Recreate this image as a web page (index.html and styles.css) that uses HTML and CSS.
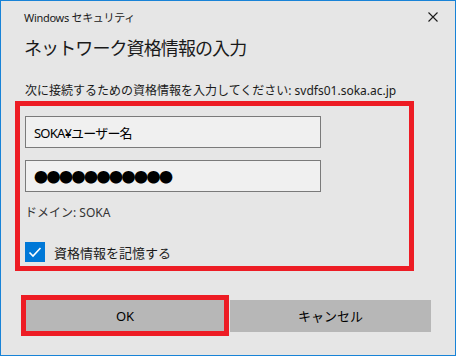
FILE: index.html
```html
<!DOCTYPE html>
<html lang="ja">
<head>
    <meta charset="utf-8">
    <title>Windows セキュリティ</title>
    <link rel="stylesheet" href="styles.css">
</head>
<body>
    <div class="window">
        <!-- Title bar -->
        <div class="titlebar">
            <span class="title">Windows セキュリティ</span>
            <svg class="close" width="10" height="10" viewBox="0 0 10 10">
                <path d="M0.5 0.5 L9.5 9.5 M9.5 0.5 L0.5 9.5" stroke="#1a1a1a" stroke-width="1.1" fill="none"/>
            </svg>
        </div>

        <h1 class="heading">ネットワーク資格情報の入力</h1>
        <p class="prompt">次に接続するための資格情報を入力してください: svdfs01.soka.ac.jp</p>

        <!-- Credentials area (highlighted) -->
        <div class="credentials">
            <div class="field">SOKA¥ユーザー名</div>
            <div class="field password">●●●●●●●●●●●</div>
            <div class="domain">ドメイン: SOKA</div>
            <label class="remember">
                <span class="checkbox">
                    <svg width="20" height="20" viewBox="0 0 20 20">
                        <path d="M4.5 10.5 L8 14 L15.5 6" stroke="#fff" stroke-width="1.6" fill="none"/>
                    </svg>
                </span>
                資格情報を記憶する
            </label>
        </div>

        <!-- Buttons -->
        <div class="buttons">
            <button class="btn btn-ok">OK</button>
            <button class="btn btn-cancel">キャンセル</button>
        </div>
    </div>
</body>
</html>
```

FILE: styles.css
```css
/* Whole dialog window */
body {
    margin: 0;
    font-family: "Noto Sans", "Noto Sans CJK JP", sans-serif;
    color: #1a1a1a;
}
.window {
    width: 456px;
    height: 356px;
    box-sizing: border-box;
    border: 1px solid #1883d7;
    background-color: #e6e6e6;
    display: flex;
    flex-direction: column;
}
.titlebar {
    height: 32px;
    padding-left: 23px;
    padding-right: 17px;
    display: flex;
    align-items: center;
    justify-content: space-between;
}
.title {
    font-size: 11px;
    letter-spacing: -0.3px;
}
.heading {
    margin: 3px 0 0 23px;
    font-size: 18px;
    line-height: 24px;
    font-weight: normal;
    letter-spacing: -0.9px;
}
.prompt {
    margin: 23px 0 0 24px;
    font-size: 12px;
    line-height: 16px;
}
/* Red highlight box round the input section */
.credentials {
    margin: 2px 0 0 14px;
    width: 399px;
    box-sizing: border-box;
    border: 5px solid #ed1c24;
    padding: 10px 0 4px 5px;
    display: flex;
    flex-direction: column;
}
.field {
    width: 296px;
    height: 32px;
    box-sizing: border-box;
    border: 1px solid #7a7a7a;
    background-color: #f0f0f0;
    padding-left: 8px;
    display: flex;
    align-items: center;
    font-size: 13px;
    letter-spacing: -0.8px;
    color: #000;
}
.field + .field {
    margin-top: 12px;
}
.password {
    font-family: "Noto Sans CJK JP", sans-serif;
    font-size: 14px;
    letter-spacing: -1.5px;
}
.domain {
    margin-top: 12px;
    font-size: 12px;
    line-height: 18px;
    color: #333;
}
.remember {
    margin-top: 20px;
    display: flex;
    align-items: center;
    font-size: 13px;
    color: #1a1a1a;
}
.checkbox {
    width: 20px;
    height: 20px;
    background-color: #0078d7;
    margin-right: 9px;
    display: flex;
}
.buttons {
    margin: 24px 0 0 20px;
    display: flex;
    align-items: center;
}
.btn {
    font-family: "Noto Sans", "Noto Sans CJK JP", sans-serif;
    font-size: 13px;
    color: #000;
    background-color: #b7b7b7;
    border: none;
    padding: 0;
    height: 32px;
}
.btn-ok {
    width: 208px;
    height: 41px;
    border: 5px solid #ed1c24;
}
.btn-cancel {
    width: 201px;
    margin-left: 1px;
}
```
